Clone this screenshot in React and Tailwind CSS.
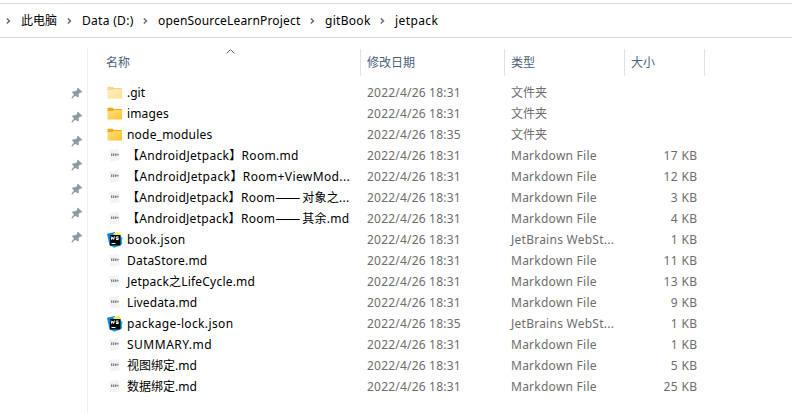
const crumbs = [
  { label: "此电脑", style: "w-[61px]" },
  { label: "Data (D:)", style: "w-[76px] tracking-[0.3px]" },
  { label: "openSourceLearnProject", style: "w-[167px] tracking-[0.17px]" },
  { label: "gitBook", style: "w-[70px] tracking-[0.3px]" },
  { label: "jetpack", style: "w-[70px] tracking-[0.4px]" },
];

const MD = "Markdown File";
const WS = "JetBrains WebSt...";
const files = [
  { icon: "hidden", name: ".git", fit: "tracking-normal", time: "18:31", type: "文件夹" },
  { icon: "folder", name: "images", fit: "tracking-[0.15px]", time: "18:31", type: "文件夹" },
  { icon: "folder", name: "node_modules", fit: "tracking-[0.2px]", time: "18:35", type: "文件夹" },
  { icon: "md", name: "【AndroidJetpack】Room.md", fit: "tracking-[0.31px]", time: "18:31", type: MD, size: "17 KB" },
  { icon: "md", name: "【AndroidJetpack】Room+ViewMod...", fit: "tracking-[0.39px]", time: "18:31", type: MD, size: "12 KB" },
  { icon: "md", name: "【AndroidJetpack】Room", dash: true, rest: "对象之...", fit: "tracking-[0.27px]", time: "18:31", type: MD, size: "3 KB" },
  { icon: "md", name: "【AndroidJetpack】Room", dash: true, rest: "其余.md", fit: "tracking-[0.27px]", time: "18:31", type: MD, size: "4 KB" },
  { icon: "ws", name: "book.json", fit: "tracking-[0.4px]", time: "18:31", type: WS, size: "1 KB" },
  { icon: "md", name: "DataStore.md", fit: "tracking-[0.2px]", time: "18:31", type: MD, size: "11 KB" },
  { icon: "md", name: "Jetpack之LifeCycle.md", fit: "tracking-[0.2px]", time: "18:31", type: MD, size: "13 KB" },
  { icon: "md", name: "Livedata.md", fit: "tracking-[0.1px]", time: "18:31", type: MD, size: "9 KB" },
  { icon: "ws", name: "package-lock.json", fit: "tracking-[0.36px]", time: "18:35", type: WS, size: "1 KB" },
  { icon: "md", name: "SUMMARY.md", fit: "tracking-[0.5px]", time: "18:31", type: MD, size: "1 KB" },
  { icon: "md", name: "视图绑定.md", fit: "tracking-normal", time: "18:31", type: MD, size: "5 KB" },
  { icon: "md", name: "数据绑定.md", fit: "tracking-normal", time: "18:31", type: MD, size: "25 KB" },
];

function Chevron() {
  return (
    <svg className="h-[8px] w-[6px] shrink-0" viewBox="0 0 6 8" fill="none" stroke="#666" strokeWidth="1.4">
      <path d="M.8 1.500l2.700 2.500-2.700 2.500" />
    </svg>
  );
}

function Pin() {
  return (
    <svg className="h-[12px] w-[12px]" viewBox="0 0 12 12" fill="#8f9ba4">
      <path d="M6.800 .6L11.200 4.800l-.9.900-1.100-.2-1.600 1.700.2 2.400-1.100 1L4.300 8.700 1.300 11.400.4 11.300l.2-.9L3.200 7.600 1 5.300l1-1.100 2.600.1 1.700-1.600-.3-1.200z" />
    </svg>
  );
}

function FileIcon({ kind }) {
  if (kind === "md") {
    return (
      <svg className="h-4 w-4" viewBox="0 0 16 16">
        <path d="M2 2.200L11.500 1 12.800 12.300 3.200 13.500z" fill="#f3f3f3" />
        <path d="M4 5.500h7.500v2.500h-7.500z" fill="#cfcfcf" />
        <path d="M4.500 5.500v2.500M6.500 5.500v2.500M8.500 5.500v2.500" stroke="#858585" strokeWidth="1" />
        <path d="M9.500 6.600h2" stroke="#858585" strokeWidth="1" />
      </svg>
    );
  }
  if (kind === "ws") {
    return (
      <svg className="h-4 w-4" viewBox="0 0 16 16">
        <path d="M0 1.800L8 0v15.600L2.500 13.500z" fill="#0b86dc" />
        <path d="M6 1.500L11 0l3 2 .3 3-4 2z" fill="#e5f34e" />
        <path d="M13 4l2.600 2-.8 3 .5 3-3.300 2-5 1.800L4 13z" fill="#0baef0" />
        <rect x="3" y="3" width="10.500" height="10.500" fill="#050505" />
        <path d="M4 4.500l.7 3 1-2.300 1 2.300.7-3M11.500 5H9.300v1.200h2v1.300H9" stroke="#fff" strokeWidth="1" fill="none" />
        <path d="M4.500 11.500h4" stroke="#fff" strokeWidth="1" />
      </svg>
    );
  }
  return (
    <svg className={kind === "hidden" ? "h-4 w-4 opacity-50" : "h-4 w-4"} viewBox="0 0 16 16">
      <defs>
        <linearGradient id="folder" x1="0" y1="0" x2="1" y2="1">
          <stop offset="0" stopColor="#ffe07f" />
          <stop offset="1" stopColor="#fcc22c" />
        </linearGradient>
      </defs>
      <path d="M.5 2.500q0-.7.700-.7H5.500l1.200 1.200h7.500q.8 0 .8.800v2H.5z" fill="#eeaa0c" />
      <path d="M.5 5h5.200l1-1h8.300v9q0 .6-.6.6H1.100q-.6 0-.6-.6z" fill="url(#folder)" />
    </svg>
  );
}

export default function App() {
  return (
    <div className="flex h-[413px] w-[792px] flex-col overflow-hidden bg-white font-['Noto_Sans','Noto_Sans_CJK_SC',sans-serif] text-[12px] whitespace-nowrap text-black">
      <header className="mt-[3px] flex h-[35px] items-center border-y border-[#d9d9d9] pl-[6px]">
        {crumbs.map((c) => (
          <div key={c.label} className={`flex shrink-0 items-center ${c.style}`}>
            <Chevron />
            <span className="ml-[9px]">{c.label}</span>
          </div>
        ))}
      </header>
      <main className="flex flex-1">
        <aside className="mt-[10px] flex w-[88px] flex-col items-end gap-[12px] border-r border-[#f0f0f0] pt-[39px] pr-[4px]">
          {[0, 1, 2, 3, 4, 5, 6].map((i) => (
            <Pin key={i} />
          ))}
        </aside>
        <section className="flex-1 pt-[11px]">
          <div className="relative flex h-[27px] text-[#4c607a]">
            <svg className="absolute top-0 left-[138px] h-[5px] w-[9px]" viewBox="0 0 9 5" fill="none" stroke="#666">
              <path d="M.5 4.500l4-4 4 4" />
            </svg>
            <div className="flex w-[273px] items-center border-r border-[#e2e2e2] pl-[18px]">名称</div>
            <div className="flex w-[144px] items-center border-r border-[#e2e2e2] pl-[6px]">修改日期</div>
            <div className="flex w-[120px] items-center border-r border-[#e2e2e2] pl-[6px]">类型</div>
            <div className="flex w-[80px] items-center border-r border-[#e2e2e2] pl-[6px]">大小</div>
          </div>
          <div className="mt-[6px]">
            {files.map((f) => (
              <div key={f.name + (f.rest ?? "")} className="flex h-[21px] items-center text-[#6d6d6d]">
                <div className="flex w-[279px] items-center gap-[4px] pl-[19px] text-black">
                  <FileIcon kind={f.icon} />
                  <div className={`flex h-[16px] items-center leading-[16px] ${f.fit}`}>
                    <span>{f.name}</span>
                    {f.dash && (
                      <span className="w-[27px] pb-[2px] font-['Noto_Sans_CJK_SC',sans-serif] text-[15px] leading-[16px] tracking-normal">——</span>
                    )}
                    {f.rest && <span>{f.rest}</span>}
                  </div>
                </div>
                <div className="w-[144px] tracking-[0.2px]">2022/4/26 {f.time}</div>
                <div className={f.type === "文件夹" ? "w-[113px]" : "w-[113px] tracking-[0.25px]"}>{f.type}</div>
                <div className="w-[73.5px] text-right tracking-[0.4px]">{f.size}</div>
              </div>
            ))}
          </div>
        </section>
      </main>
    </div>
  );
}
